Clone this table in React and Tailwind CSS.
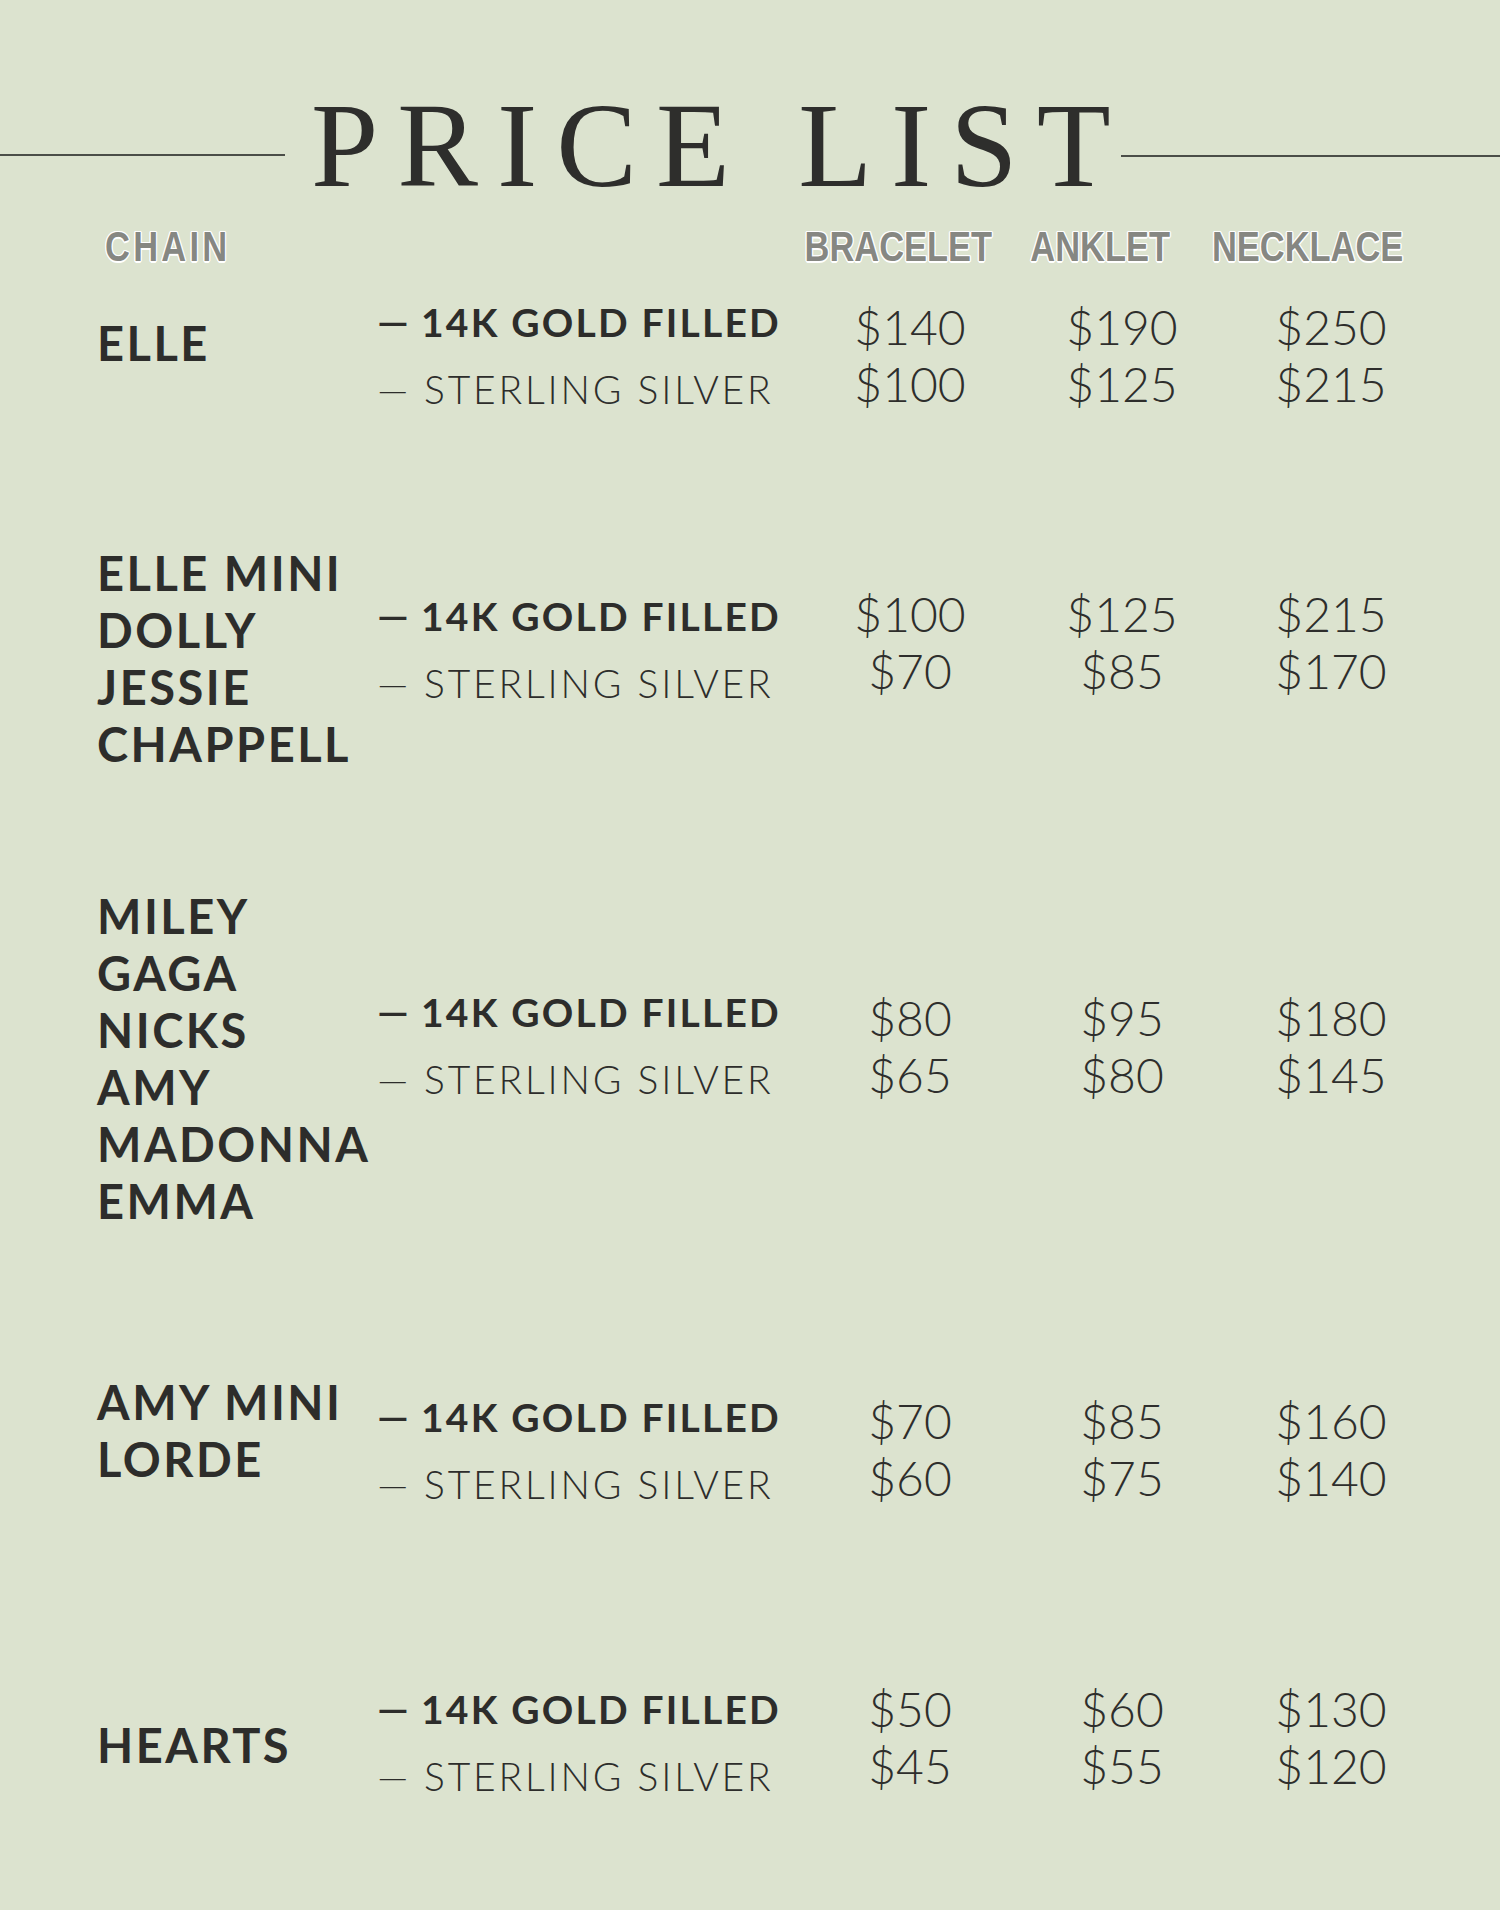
const names = 'font-["Lato","Noto_Sans",sans-serif] font-bold text-[47px] leading-[57px] tracking-[2.5px] text-[#2d2d2b]'
const priceCls = 'font-["Lato","Noto_Sans",sans-serif] font-light text-[48px] leading-[57px] text-[#2e2e2c] text-center'
const headCls =
  'inline-block shrink-0 scale-x-[0.82] font-["Liberation_Sans",sans-serif] font-bold text-[42px] leading-none text-[#868782] whitespace-nowrap [text-shadow:1.5px_0_0_#fff,-1.5px_0_0_#fff,0_1.5px_0_#fff,0_-1.5px_0_#fff,1px_1px_0_#fff,-1px_-1px_0_#fff,1px_-1px_0_#fff,-1px_1px_0_#fff]'

const sections = [
  {
    names: ['ELLE'],
    prices: [['$140', '$190', '$250'], ['$100', '$125', '$215']],
    mt: 'mt-[30px]',
    pn: 'pt-[17px]', pv: 'pt-[5px]', pp: 'pt-0',
  },
  {
    names: ['ELLE MINI', 'DOLLY', 'JESSIE', 'CHAPPELL'],
    prices: [['$100', '$125', '$215'], ['$70', '$85', '$170']],
    mt: 'mt-[133px]',
    pn: 'pt-0', pv: 'pt-[52px]', pp: 'pt-[40px]',
  },
  {
    names: ['MILEY', 'GAGA', 'NICKS', 'AMY', 'MADONNA', 'EMMA'],
    prices: [['$80', '$95', '$180'], ['$65', '$80', '$145']],
    mt: 'mt-[115px]',
    pn: 'pt-0', pv: 'pt-[105px]', pp: 'pt-[101px]',
  },
  {
    names: ['AMY MINI', 'LORDE'],
    prices: [['$70', '$85', '$160'], ['$60', '$75', '$140']],
    mt: 'mt-[144px]',
    pn: 'pt-0', pv: 'pt-[24px]', pp: 'pt-[18px]',
  },
  {
    names: ['HEARTS'],
    prices: [['$50', '$60', '$130'], ['$45', '$55', '$120']],
    mt: 'mt-[174px]',
    pn: 'pt-[37px]', pv: 'pt-[10px]', pp: 'pt-0',
  },
]

const Variant = ({ bold, children }) => (
  <div
    className={`flex h-[39px] items-center font-["Lato","Noto_Sans",sans-serif] text-[39px] leading-[39px] text-[#2d2d2b] ${
      bold ? 'font-bold tracking-[2.2px]' : 'font-light tracking-[2.8px]'
    }`}
  >
    <span className={`w-[44px] shrink-0 tracking-normal text-[40px] leading-[39px] ${bold ? 'font-semibold' : 'font-light'}`}>—</span>
    <span className={bold ? '' : 'pl-[3px]'}>{children}</span>
  </div>
)

const Section = ({ s }) => (
  <section className={`flex items-start pl-[97px] ${s.mt}`}>
    <div className={`w-[280px] shrink-0 ${s.pn}`}>
      {s.names.map(n => (
        <div key={n} className={names}>{n}</div>
      ))}
    </div>
    <div className={`w-[427px] shrink-0 flex flex-col gap-[28px] ${s.pv}`}>
      <Variant bold>14K GOLD FILLED</Variant>
      <Variant>STERLING SILVER</Variant>
    </div>
    <div className={`flex flex-col ${s.pp}`}>
      {s.prices.map((row, i) => (
        <div key={i} className="flex">
          <div className={`w-[212px] ${priceCls}`}>{row[0]}</div>
          <div className={`w-[212px] ${priceCls}`}>{row[1]}</div>
          <div className={`w-[206px] ${priceCls}`}>{row[2]}</div>
        </div>
      ))}
    </div>
  </section>
)

export default function App() {
  return (
    <div className="min-h-screen w-full bg-[#dce3cf] pt-[85px] pb-[80px]">
      {/* title with rules */}
      <div className="flex items-start">
        <div className="w-[285px] h-[2px] mt-[69px] bg-[#4b4e48] shrink-0" />
        <h1 className='ml-[26px] font-["Liberation_Serif",serif] font-normal text-[121px] leading-none tracking-[19px] text-[#2e2e2c] whitespace-nowrap'>
          PRICE LIS<span className="tracking-normal">T</span>
        </h1>
        <div className="flex-1 h-[2px] mt-[70px] ml-[10px] bg-[#4b4e48]" />
      </div>

      {/* column headers */}
      <div className="flex mt-[20px]">
        <div className="w-[800px] shrink-0 pl-[105px]">
          <span className={`${headCls} origin-left tracking-[4px]`}>CHAIN</span>
        </div>
        <div className="w-[196px] flex justify-center">
          <span className={headCls}>BRACELET</span>
        </div>
        <div className="w-[208px] flex justify-center">
          <span className={headCls}>ANKLET</span>
        </div>
        <div className="w-[208px] flex justify-center">
          <span className={headCls}>NECKLACE</span>
        </div>
      </div>

      {sections.map((s, i) => (
        <Section key={i} s={s} />
      ))}
    </div>
  )
}
